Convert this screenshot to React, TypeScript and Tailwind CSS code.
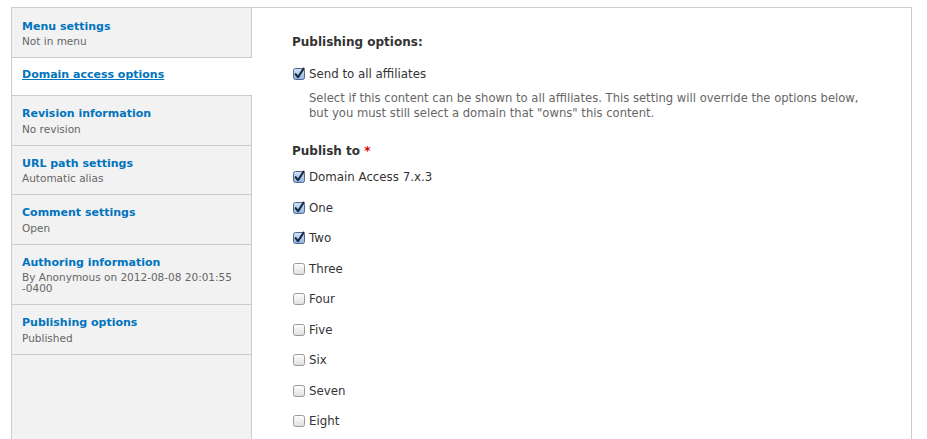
import React from 'react';

type Tab = {
  title: string;
  summary?: string[];
  active?: boolean;
};

const tabs: Tab[] = [
  { title: 'Menu settings', summary: ['Not in menu'] },
  { title: 'Domain access options', active: true },
  { title: 'Revision information', summary: ['No revision'] },
  { title: 'URL path settings', summary: ['Automatic alias'] },
  { title: 'Comment settings', summary: ['Open'] },
  { title: 'Authoring information', summary: ['By Anonymous on 2012-08-08 20:01:55', '-0400'] },
  { title: 'Publishing options', summary: ['Published'] },
];

const domains: { label: string; checked: boolean }[] = [
  { label: 'Domain Access 7.x.3', checked: true },
  { label: 'One', checked: true },
  { label: 'Two', checked: true },
  { label: 'Three', checked: false },
  { label: 'Four', checked: false },
  { label: 'Five', checked: false },
  { label: 'Six', checked: false },
  { label: 'Seven', checked: false },
  { label: 'Eight', checked: false },
];

const Checkbox: React.FC<{ checked: boolean }> = ({ checked }) => (
  <svg width="14" height="14" viewBox="0 0 14 14" className="shrink-0">
    <defs>
      <linearGradient id="cbOff" x1="0" y1="0" x2="0" y2="1">
        <stop offset="0" stopColor="#ffffff" />
        <stop offset="1" stopColor="#dedede" />
      </linearGradient>
      <linearGradient id="cbOn" x1="0" y1="0" x2="0" y2="1">
        <stop offset="0" stopColor="#d3e3f6" />
        <stop offset="1" stopColor="#8fb4e2" />
      </linearGradient>
    </defs>
    <rect
      x="1.5"
      y="1.5"
      width="11"
      height="11"
      rx="2"
      fill={checked ? 'url(#cbOn)' : 'url(#cbOff)'}
      stroke={checked ? '#52688a' : '#9a9a9a'}
      strokeWidth="1"
    />
    {checked && (
      <path
        d="M3.6 7.2 L6 10.2 L11.6 1.6"
        fill="none"
        stroke="#1b2a44"
        strokeWidth="2.1"
        strokeLinecap="round"
        strokeLinejoin="round"
      />
    )}
  </svg>
);

export default function App() {
  return (
    <div className="bg-white min-h-screen pt-[7px] pl-[11px]" style={{ fontFamily: '"DejaVu Sans", Verdana, sans-serif' }}>
      <div className="w-[901px] flex border border-[#cccccc] pb-[40px] bg-[#f2f2f2]">
        <div className="w-[240px] shrink-0 flex flex-col">
          {tabs.map((tab, i) =>
            tab.active ? (
              <div key={tab.title} className={`bg-white pl-[10px] pt-[9px] pb-[12px] ${i > 0 ? 'border-t border-[#cccccc]' : ''}`}>
                <a href="#" className="block text-[11px] leading-[16px] font-bold text-[#0074bd] underline">
                  {tab.title}
                </a>
              </div>
            ) : (
              <div
                key={tab.title}
                className={`bg-[#f2f2f2] pl-[10px] pb-[10px] border-r border-[#cccccc] ${i > 0 ? 'border-t pt-[10px]' : 'pt-[10.5px]'}`}
              >
                <a href="#" className="block text-[11px] leading-[16px] font-bold text-[#0074bd] no-underline">
                  {tab.title}
                </a>
                <div className="mt-[1.5px] text-[10.5px] leading-[11px] text-[#666666]">
                  {tab.summary?.map(s => (
                    <div key={s}>{s}</div>
                  ))}
                </div>
              </div>
            )
          )}
          <div className="flex-1 bg-[#f2f2f2] border-r border-t border-[#cccccc]" />
        </div>

        <div className="flex-1 bg-white pl-[40px] pt-[26px] pb-[20px] text-[#333333]">
          <h2 className="text-[12px] leading-[16px] font-bold">Publishing options:</h2>

          <label className="mt-[16px] flex items-center gap-[3px] text-[11.8px] leading-[16px]">
            <Checkbox checked />
            <span>Send to all affiliates</span>
          </label>
          <div className="mt-[8.5px] pl-[17px] text-[11.6px] leading-[15px] text-[#666666]">
            Select if this content can be shown to all affiliates. This setting will override the options below,
            <br />
            but you must still select a domain that "owns" this content.
          </div>

          <h3 className="mt-[22.5px] text-[12px] leading-[16px] font-bold">
            Publish to <span className="text-[#e00000]">*</span>
          </h3>

          <div className="mt-[10px] flex flex-col gap-[14.5px]">
            {domains.map(d => (
              <label key={d.label} className="flex items-center gap-[3px] text-[11.8px] leading-[16px]">
                <Checkbox checked={d.checked} />
                <span>{d.label}</span>
              </label>
            ))}
          </div>
        </div>
      </div>
    </div>
  );
}
